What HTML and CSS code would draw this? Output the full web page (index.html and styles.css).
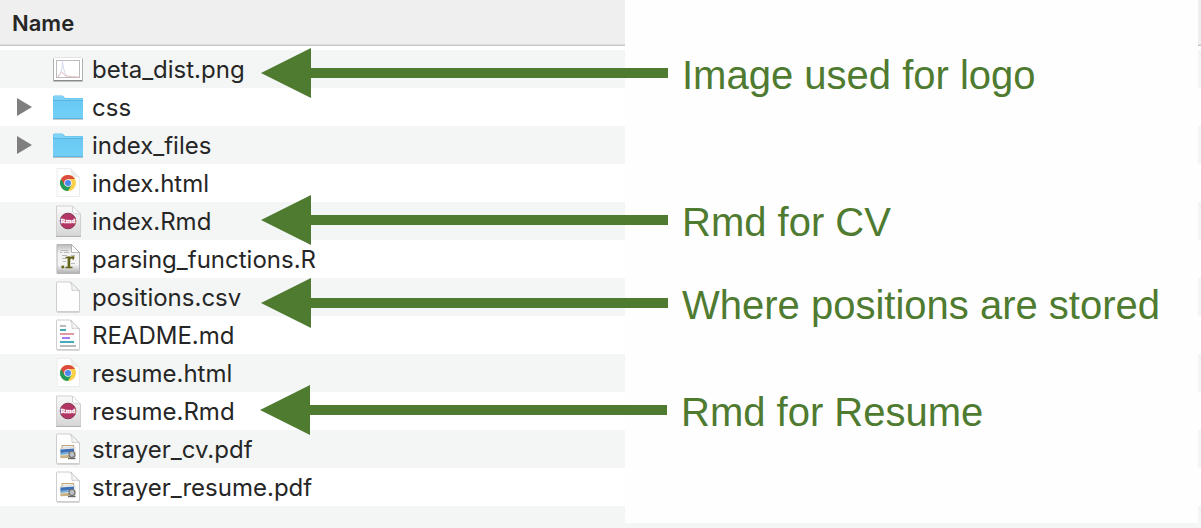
FILE: index.html
```html
<!DOCTYPE html>
<html lang="en">
<head>
<meta charset="utf-8">
<title>Project files</title>
<link rel="stylesheet" href="styles.css">
</head>
<body>
<svg class="defs" aria-hidden="true">
  <defs>
    <linearGradient id="fold" x1="0" y1="0" x2="0" y2="1"><stop offset="0" stop-color="#6ac9f3"/><stop offset="1" stop-color="#72d0f8"/></linearGradient>
    <linearGradient id="grey" x1="0" y1="0" x2="0" y2="1"><stop offset="0" stop-color="#fafafa"/><stop offset="1" stop-color="#d6d6d6"/></linearGradient>
    <linearGradient id="dark" x1="0" y1="0" x2="0" y2="1"><stop offset="0" stop-color="#b9b9b9"/><stop offset=".3" stop-color="#f4f4f4"/><stop offset=".7" stop-color="#f4f4f4"/><stop offset="1" stop-color="#b0b0b0"/></linearGradient>
  </defs>
  <symbol id="i-png" viewBox="0 0 32 32">
    <rect x="1" y="4.500" width="30" height="24.500" rx="1" fill="#000" opacity=".14"/>
    <rect x="1.500" y="6" width="29" height="22.300" rx=".5" fill="#000" opacity=".35"/>
    <rect x="2" y="5" width="28" height="22" fill="#fff"/>
    <rect x="4.500" y="7.500" width="23" height="17" fill="#fff" stroke="#bcbcbc"/>
    <path d="M6 24Q9 22 10 15L10.500 8.500L11.500 15Q13 22 15 24" fill="none" stroke="#d6daee"/>
    <path d="M5.500 23.500Q8 21 9.500 19L11 20L13 22.500Q18 24 27 24" fill="none" stroke="#e6c3c3"/>
  </symbol>
  <symbol id="i-folder" viewBox="0 0 32 32">
    <path d="M1 28.500h30" stroke="#000" opacity=".2"/>
    <path d="M1 6Q1 4.500 2.500 4.500H10Q11 4.500 12 6L13 7H30Q31 7 31 8V28H1Z" fill="#5bbbe8"/>
    <path d="M1.500 6Q1.500 5 2.500 5H10L12.500 7.500H30.500V9H1.500Z" fill="#7fd3f7"/>
    <path d="M1 9.500H31V27Q31 28 30 28H2Q1 28 1 27Z" fill="url(#fold)"/>
    <path d="M1 9.500H31M1.500 27.500H30.500" stroke="#56b5e2" fill="none"/>
  </symbol>
  <symbol id="i-chrome" viewBox="0 0 32 32">
    <path d="M5 1.500H18.500L27.500 10.500V29.500H5Z" fill="#fefefe" stroke="#ececec"/>
    <path d="M18.500 1.500L27.500 10.500Q23 8.500 20 9.500Q20 5 18.500 1.500Z" fill="#ededed" stroke="#dedede" stroke-width=".5"/>
    <circle cx="16" cy="16" r="8" fill="#fcd04a"/>
    <path d="M16 16L9.070 12A8 8 0 0 0 16 24L19.500 18Z" fill="#219a5a"/>
    <path d="M9.070 12A8 8 0 0 1 22.930 12H16L12.500 18Z" fill="#dd4b3e"/>
    <circle cx="16" cy="16" r="3.800" fill="#f6f6f6"/>
    <circle cx="16" cy="16" r="3" fill="#4a86ee"/>
  </symbol>
  <symbol id="i-rmd" viewBox="0 0 32 32">
    <path d="M4.500 1H20L28.500 9.500V31H4.500Z" fill="url(#grey)" stroke="#d0d0d0"/>
    <path d="M4 31.500H29" stroke="#a5a5a5" stroke-width=".8"/>
    <path d="M20.500 1L28.500 9L22 8.500Q20.500 8 20.500 6Z" fill="#fff" stroke="#c4c4c4" stroke-width=".7"/>
    <circle cx="16" cy="16" r="7.800" fill="#b23563" stroke="#85385a"/>
  </symbol>
  <symbol id="i-r" viewBox="0 0 32 32">
    <path d="M5 1.500H19.500L27.500 9.500V30.500H5Z" fill="url(#dark)" stroke="#b4b4b4"/>
    <path d="M19.500 1.500V9.500H27.500Z" fill="#fff" stroke="#999" stroke-width=".7"/>
    <path d="M9 7.500H16M8 9.500H10M12 9.500H17M10 12.500H15M10 15.500H14M19 12.500H23M19 15.500H22M11 18.500H14M19 20.500H23M9 24.500H13M9 27.500H11" stroke="#b4b4b4" stroke-width=".9"/>
    <path d="M13.500 14.500H17V24.500M13.500 24.500H20.500" fill="none" stroke="#65651a" stroke-width="1.600"/>
    <path d="M16.900 13.500V25" stroke="#65651a" stroke-width="2.600"/>
    <path d="M17.500 16Q19 13.500 21.500 14.200L21 16.500" fill="none" stroke="#65651a" stroke-width="1.800"/>
    <circle cx="10.800" cy="24" r="1.400" fill="#65651a"/>
  </symbol>
  <symbol id="i-page" viewBox="0 0 32 32">
    <path d="M5 31H27.500" stroke="#b4b4b4"/>
    <path d="M4.500 1.500Q4.500 1 5 1H18.500L27.500 10V30Q27.500 30.500 27 30.500H5Q4.500 30.500 4.500 30Z" fill="#fefefe" stroke="#cecece"/>
    <path d="M18.500 1L27.500 10Q25 8.500 20 9.500Q20.500 4 18.500 1Z" fill="#f6f6f6" stroke="#c2c2c2" stroke-width=".8"/>
  </symbol>
  <symbol id="i-md" viewBox="0 0 32 32">
    <use href="#i-page" width="32" height="32"/>
    <g stroke-width="2"><path d="M8 7H14M8 27H24" stroke="#b9b9b9"/><path d="M8 11H14M8 23H22" stroke="#46a8b8"/><path d="M8 15H22" stroke="#df9aa4"/><path d="M10 19H18" stroke="#a97bf2"/></g>
  </symbol>
  <symbol id="i-pdf" viewBox="0 0 32 32">
    <use href="#i-page" width="32" height="32"/>
    <path d="M9.500 12H22V20H9.500Z" fill="#c9a477"/>
    <path d="M10.500 13H21V16H10.500Z" fill="#e8eff3"/>
    <path d="M8.500 15.500L23 14V24L8.500 25Z" fill="#f5f3ed" stroke="#c9c4b8" stroke-width=".5"/>
    <path d="M8.500 16.500L22 15.500V19L8.500 20Z" fill="#3c70ba"/>
    <path d="M8.500 20L22 19V20.500L8.500 22Z" fill="#74add4"/>
    <path d="M8.500 22.500L17 22V25H8.500Z" fill="#c8b184"/>
    <circle cx="20" cy="21.500" r="3" fill="#b9c1c5" stroke="#77706a" stroke-width="1.200"/>
    <path d="M16 25.500H23.500" stroke="#6a6763" stroke-width="1.400"/>
  </symbol>
</svg>
<main class="finder">
  <table class="files">
    <thead><tr><th scope="col">Name</th></tr></thead>
    <tbody>
      <tr class="spacer"><td></td></tr>
      <tr><td><div class="file"><svg class="icon"><use href="#i-png"/></svg><span class="name">beta_dist.png</span></div></td></tr>
      <tr><td><div class="file"><button class="toggle" aria-label="Expand css"></button><svg class="icon"><use href="#i-folder"/></svg><span class="name">css</span></div></td></tr>
      <tr><td><div class="file"><button class="toggle" aria-label="Expand index_files"></button><svg class="icon"><use href="#i-folder"/></svg><span class="name">index_files</span></div></td></tr>
      <tr><td><div class="file"><svg class="icon"><use href="#i-chrome"/></svg><span class="name">index.html</span></div></td></tr>
      <tr><td><div class="file"><svg class="icon" viewBox="0 0 32 32"><use href="#i-rmd"/><text class="badge" x="16" y="18" text-anchor="middle">Rmd</text></svg><span class="name">index.Rmd</span></div></td></tr>
      <tr><td><div class="file"><svg class="icon"><use href="#i-r"/></svg><span class="name">parsing_functions.R</span></div></td></tr>
      <tr><td><div class="file"><svg class="icon"><use href="#i-page"/></svg><span class="name">positions.csv</span></div></td></tr>
      <tr><td><div class="file"><svg class="icon"><use href="#i-md"/></svg><span class="name">README.md</span></div></td></tr>
      <tr><td><div class="file"><svg class="icon"><use href="#i-chrome"/></svg><span class="name">resume.html</span></div></td></tr>
      <tr><td><div class="file"><svg class="icon" viewBox="0 0 32 32"><use href="#i-rmd"/><text class="badge" x="16" y="18" text-anchor="middle">Rmd</text></svg><span class="name">resume.Rmd</span></div></td></tr>
      <tr><td><div class="file"><svg class="icon"><use href="#i-pdf"/></svg><span class="name">strayer_cv.pdf</span></div></td></tr>
      <tr><td><div class="file"><svg class="icon"><use href="#i-pdf"/></svg><span class="name">strayer_resume.pdf</span></div></td></tr>
      <tr><td><div class="file"></div></td></tr>
    </tbody>
  </table>
  <div class="cover"></div>
  <div class="note note-logo"><svg class="arrow" viewBox="0 0 407 50"><path d="M0 25L50 0V20H407V30H50V50Z"/></svg><span class="label">Image used for logo</span></div>
  <div class="note note-cv"><svg class="arrow" viewBox="0 0 407 50"><path d="M0 25L50 0V20H407V30H50V50Z"/></svg><span class="label">Rmd for CV</span></div>
  <div class="note note-positions"><svg class="arrow" viewBox="0 0 407 50"><path d="M0 25L50 0V20H407V30H50V50Z"/></svg><span class="label">Where positions are stored</span></div>
  <div class="note note-resume"><svg class="arrow" viewBox="0 0 407 50"><path d="M0 25L50 0V20H407V30H50V50Z"/></svg><span class="label">Rmd for Resume</span></div>
</main>
</body>
</html>
```
FILE: styles.css
```css
body {
  margin: 0;
  background: #fff;
  font-family: Inter, "Liberation Sans", sans-serif;
  color: #262626;
}

.defs {
  position: absolute;
  width: 0;
  height: 0;
}

.badge {
  font: bold 7px "Liberation Serif", serif;
  fill: #fff;
  stroke: #fff;
  stroke-width: 0.3px;
}

.finder {
  position: relative;
  height: 100vh;
  overflow: hidden;
}

.files {
  width: 100%;
  border-collapse: separate;
  border-spacing: 0;
}

.files th {
  height: 45px;
  padding: 0 12px;
  background: #efefef;
  border-bottom: 1px solid #c6c6c6;
  box-shadow: inset 0 -1px #dedede;
  font-size: 22px;
  line-height: 28px;
  font-weight: 600;
  text-align: left;
}

.files td {
  padding: 0;
}

.spacer td {
  height: 4px;
}

.files tr:nth-child(even) {
  background: #f4f6f5;
}

.file {
  display: flex;
  align-items: center;
  gap: 8px;
  height: 38px;
  padding-left: 52px;
  font-size: 24px;
  line-height: 30px;
}

.name {
  padding-top: 2px;
}

.toggle {
  width: 15px;
  height: 18px;
  margin-left: -35px;
  margin-right: 12px;
  padding: 0;
  border: 0;
  background: #7f7f7f;
  clip-path: polygon(0 0, 100% 50%, 0 100%);
}

.icon {
  width: 32px;
  height: 32px;
  flex: none;
}

/* Blank area laid over the right side of the list */
.cover {
  position: absolute;
  top: 0;
  right: 3px;
  bottom: 5px;
  left: 625px;
  background: #fefefe;
}

.note {
  position: absolute;
  left: 261px;
  display: flex;
  align-items: center;
  gap: 14px;
  height: 50px;
  font-family: "Liberation Sans", Arial, sans-serif;
  font-size: 40px;
  line-height: 46px;
  color: #4f7b30;
  white-space: nowrap;
}

.label {
  padding-top: 4px;
}

.arrow {
  width: 407px;
  height: 50px;
  fill: #4f7b30;
}

.note-logo {
  top: 48px;
}

.note-cv {
  top: 195px;
}

.note-positions {
  top: 278px;
}

.note-resume {
  top: 385px;
  left: 260px;
}
```
